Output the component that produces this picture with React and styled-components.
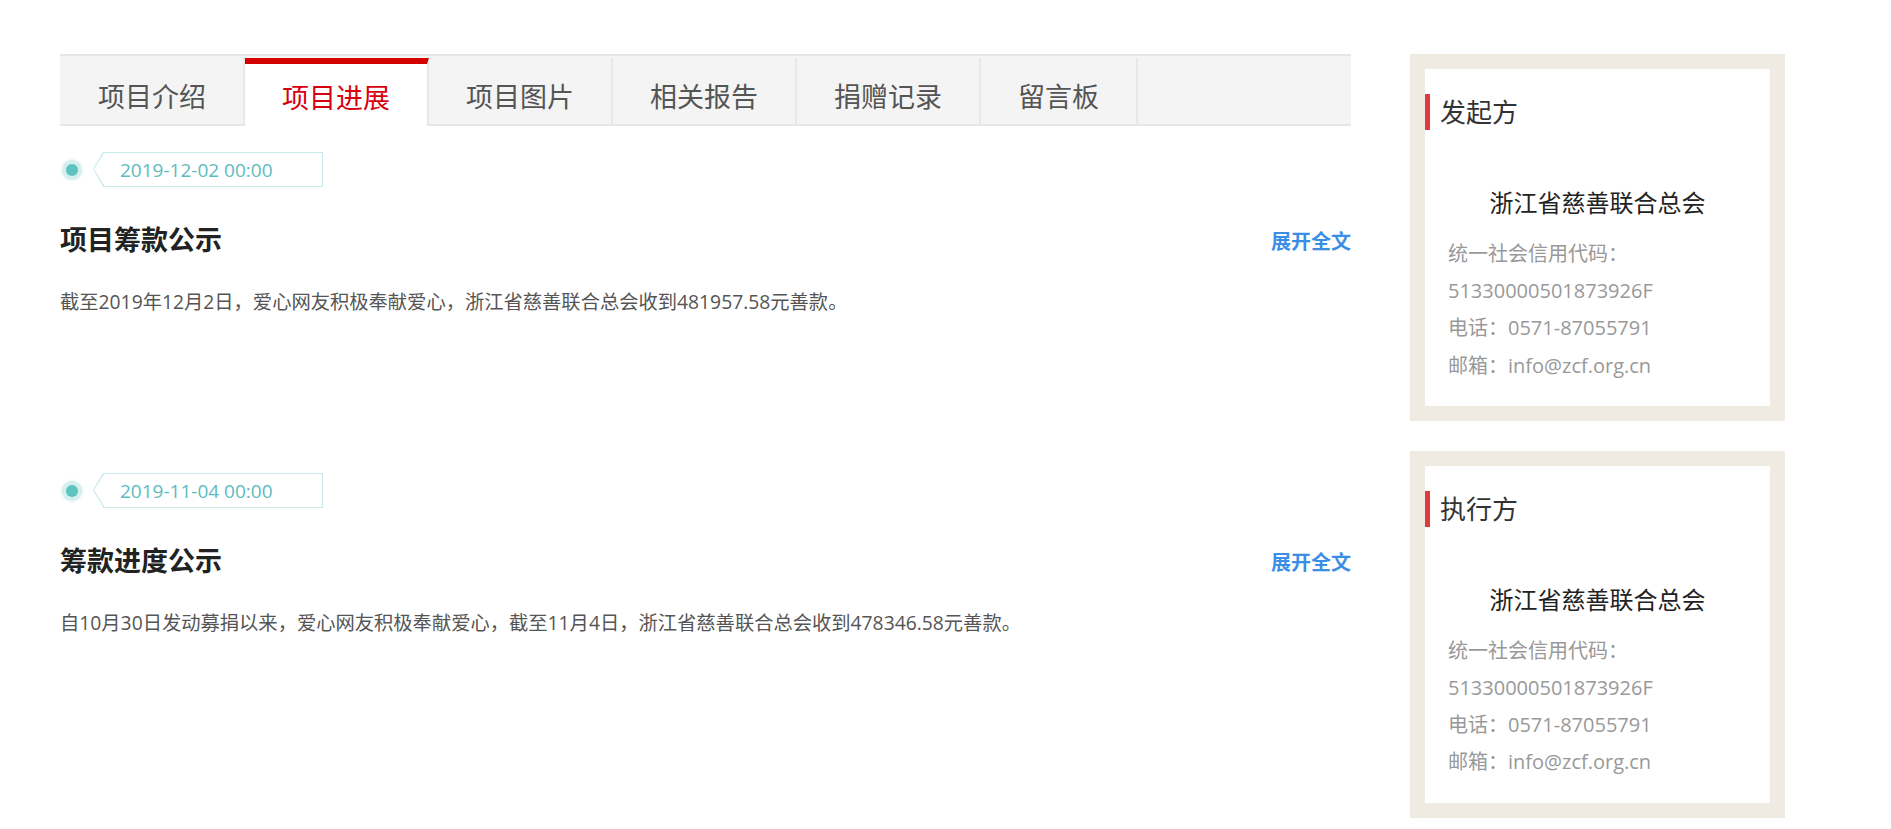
import styled, { createGlobalStyle } from "styled-components";

const GlobalStyle = createGlobalStyle`
  body {
    margin: 0;
    background: #fff;
    font-family: "Open Sans", "Noto Sans CJK SC", sans-serif;
  }
`;

const Page = styled.div`
  display: flex;
  align-items: flex-start;
  gap: 59px;
  padding: 54px 0 0 60px;
`;

const Main = styled.div`
  width: 1291px;
`;

const TabBar = styled.div`
  display: flex;
  padding-top: 2px;
  height: 66px;
  background: #f4f4f4;
  border-top: 2px solid #e6e6e6;
  border-bottom: 2px solid #e6e6e6;
`;

const Tab = styled.div`
  box-sizing: border-box;
  display: flex;
  align-items: center;
  height: ${({ $active }) => ($active ? "68px" : "66px")};
  margin-bottom: ${({ $active }) => ($active ? "-2px" : "0")};
  padding: ${({ $active }) => ($active ? "4px" : "10px")} 37px 0;
  font-size: 27px;
  line-height: 1;
  color: ${({ $active }) => ($active ? "#d7000f" : "#555")};
  background: ${({ $active }) => ($active ? "#fff" : "transparent")};
  border-top: ${({ $active }) => ($active ? "6px solid #d40000" : "0")};
  border-right: 2px solid #e8e8e8;
  cursor: pointer;

  &:first-child {
    padding-left: 38px;
  }
`;

const Timeline = styled.div`
  padding-top: 26px;
`;

const Entry = styled.div`
  margin-bottom: 156px;
`;

const DateRow = styled.div`
  display: flex;
  align-items: center;
  height: 35px;
`;

const Dot = styled.span`
  width: 12px;
  height: 12px;
  border-radius: 50%;
  background: #5cc3c0;
  box-shadow: 0 0 0 4px #d5efee, 0 0 2px 5px #eaf7f7;
  margin-left: 6px;
  margin-right: 25px;
`;

const DateTag = styled.div`
  position: relative;
  box-sizing: border-box;
  display: flex;
  align-items: center;
  width: 220px;
  height: 35px;
  padding-left: 16px;
  border: 1px solid #c8e9e9;
  font-size: 19px;
  color: #5cbcbf;

  &::before,
  &::after {
    content: "";
    position: absolute;
    width: 0;
    height: 0;
    border-style: solid;
  }
  &::before {
    left: -11px;
    top: -1px;
    border-width: 17.5px 10px 17.5px 0;
    border-color: transparent #c8e9e9 transparent transparent;
  }
  &::after {
    left: -10px;
    top: 0;
    border-width: 16.5px 10px 16.5px 0;
    border-color: transparent #fff transparent transparent;
  }
`;

const TitleRow = styled.div`
  display: flex;
  justify-content: space-between;
  align-items: center;
  margin-top: 35px;
  height: 36px;
`;

const Title = styled.h3`
  margin: 0;
  font-size: 27px;
  line-height: 36px;
  font-weight: 700;
  color: #222;
`;

const More = styled.a`
  font-size: 20px;
  font-weight: 700;
  color: #3a8ee6;
  text-decoration: none;
  cursor: pointer;
`;

const Body = styled.p`
  margin: 29px 0 0;
  font-size: 19.3px;
  line-height: 30px;
  color: #555;
`;

const Side = styled.aside`
  display: flex;
  flex-direction: column;
  gap: 30px;
  width: 375px;
`;

const Card = styled.div`
  border: 15px solid #efebe2;
  background: #fff;
  padding: 25px 0 22px;
`;

const CardTitle = styled.h4`
  margin: 0;
  border-left: 5px solid #e0393e;
  padding-left: 10px;
  font-size: 26px;
  line-height: 36px;
  font-weight: 400;
  color: #333;
`;

const OrgName = styled.div`
  margin-top: 55px;
  text-align: center;
  font-size: 24px;
  line-height: 36px;
  color: #222;
`;

const InfoList = styled.div`
  margin-top: 14px;
  padding-left: 23px;
`;

const InfoLine = styled.div`
  font-size: 20px;
  line-height: 37.2px;
  color: #999;
`;

const tabs = ["项目介绍", "项目进展", "项目图片", "相关报告", "捐赠记录", "留言板"];

const entries = [
  {
    date: "2019-12-02 00:00",
    title: "项目筹款公示",
    body: "截至2019年12月2日，爱心网友积极奉献爱心，浙江省慈善联合总会收到481957.58元善款。",
  },
  {
    date: "2019-11-04 00:00",
    title: "筹款进度公示",
    body: "自10月30日发动募捐以来，爱心网友积极奉献爱心，截至11月4日，浙江省慈善联合总会收到478346.58元善款。",
  },
];

const parties = ["发起方", "执行方"];

function OrgCard({ label }) {
  return (
    <Card>
      <CardTitle>{label}</CardTitle>
      <OrgName>浙江省慈善联合总会</OrgName>
      <InfoList>
        <InfoLine>统一社会信用代码：</InfoLine>
        <InfoLine>51330000501873926F</InfoLine>
        <InfoLine>电话：0571-87055791</InfoLine>
        <InfoLine>邮箱：info@zcf.org.cn</InfoLine>
      </InfoList>
    </Card>
  );
}

export default function App() {
  return (
    <>
      <GlobalStyle />
      <Page>
        <Main>
          <TabBar>
            {tabs.map((t, i) => (
              <Tab key={t} $active={i === 1}>
                {t}
              </Tab>
            ))}
          </TabBar>
          <Timeline>
            {entries.map((e) => (
              <Entry key={e.date}>
                <DateRow>
                  <Dot />
                  <DateTag>{e.date}</DateTag>
                </DateRow>
                <TitleRow>
                  <Title>{e.title}</Title>
                  <More>展开全文</More>
                </TitleRow>
                <Body>{e.body}</Body>
              </Entry>
            ))}
          </Timeline>
        </Main>
        <Side>
          {parties.map((p) => (
            <OrgCard key={p} label={p} />
          ))}
        </Side>
      </Page>
    </>
  );
}
